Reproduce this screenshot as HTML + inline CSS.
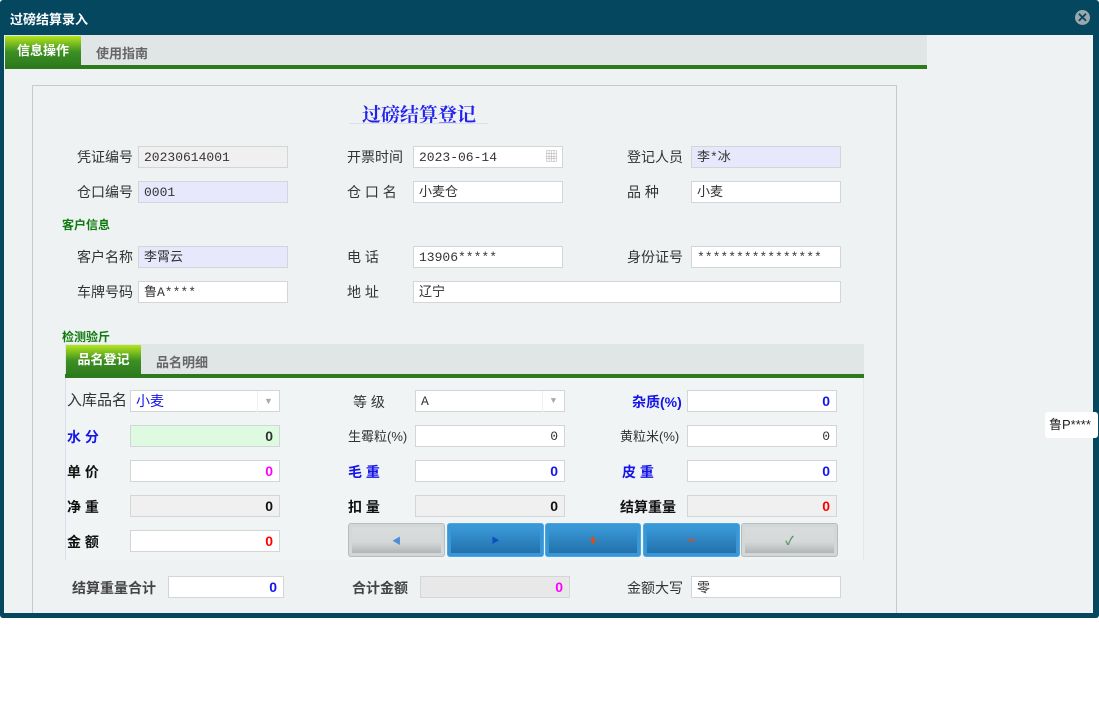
<!DOCTYPE html>
<html><head><meta charset="utf-8"><style>
*{margin:0;padding:0;box-sizing:border-box}
body{width:1099px;height:717px;background:#fff;position:relative;overflow:hidden;font-family:"Liberation Sans","Noto Sans CJK SC",sans-serif;font-size:14px;color:#333}
.a{position:absolute}
.l{position:absolute;font-size:14px;color:#333;line-height:20px;white-space:nowrap}
.b{font-weight:bold;color:#111}
.bl{color:#1515e8;font-weight:bold}
.i{position:absolute;height:22px;background:#fff;border:1px solid #d2d6d8;font-family:"Liberation Mono","Noto Sans CJK SC",monospace;font-size:13px;line-height:21px;padding:0 5px;color:#333;white-space:nowrap}
.r{text-align:right;padding-right:6px;font-family:"Liberation Sans",sans-serif;font-weight:bold;font-size:14px}
.g{background:#f0f0f0}
.p{background:#e8e8fc}
.btn{position:absolute;top:523px;height:34px;border-radius:3px;text-align:center;line-height:34px;font-size:13px}
.gb{background:linear-gradient(#d9dcdd 0%,#d6d9da 55%,#a9acad 100%);border:1px solid #b9bcbd;box-shadow:inset 0 0 0 3px #d4d7d8}
.ub{background:linear-gradient(#3d9ddd,#1f6da6);border:1px solid #4aa6e6;box-shadow:inset 0 0 0 3px #3a97d6}
</style></head><body>
<div class="a" style="left:0;top:0;width:1099px;height:618px;background:#04475f;border-radius:3px"></div>
<div class="a" style="left:10px;top:9px;color:#fff;font-weight:bold;font-size:13px">过磅结算录入</div>
<div class="a" style="left:1075px;top:10px;width:15px;height:15px;border-radius:50%;background:#9aa8ad;color:#04475f;font-size:13px;line-height:15px;text-align:center;font-weight:bold">✕</div>
<div class="a" style="left:4px;top:35px;width:1089px;height:578px;background:#eef2f3"></div>
<div class="a" style="left:5px;top:35px;width:922px;height:30px;background:#e0e5e5"></div>
<div class="a" style="left:5px;top:36px;width:76px;height:29px;background:linear-gradient(#b4e61e,#3b8f22 55%,#2f7d1f);color:#fff;font-weight:bold;font-size:13px;line-height:29px;text-align:center">信息操作</div>
<div class="a" style="left:96px;top:43px;color:#666;font-weight:bold;font-size:13px">使用指南</div>
<div class="a" style="left:5px;top:65px;width:922px;height:4px;background:#2d7a1d"></div>
<div class="a" style="left:32px;top:85px;width:865px;height:528px;border:1px solid #c8cbcc;border-bottom:none"></div>
<div class="a" style="left:362px;top:100px;font-family:'Liberation Serif','Noto Serif CJK SC',serif;font-size:19px;font-weight:bold;color:#2222ee">过磅结算登记</div>
<div class="a" style="left:349px;top:123px;width:139px;height:1px;background:#dde"></div>

<div class="l" style="left:77px;top:147px">凭证编号</div><div class="i g" style="left:138px;top:146px;width:150px">20230614001</div>
<div class="l" style="left:347px;top:147px">开票时间</div><div class="i" style="left:413px;top:146px;width:150px">2023-06-14<span style="position:absolute;right:4px;top:0;color:#aaa;font-size:13px">▦</span></div>
<div class="l" style="left:627px;top:147px">登记人员</div><div class="i p" style="left:691px;top:146px;width:150px">李*冰</div>
<div class="l" style="left:77px;top:182px">仓口编号</div><div class="i p" style="left:138px;top:181px;width:150px">0001</div>
<div class="l" style="left:347px;top:182px">仓 口 名</div><div class="i" style="left:413px;top:181px;width:150px">小麦仓</div>
<div class="l" style="left:627px;top:182px">品 种</div><div class="i" style="left:691px;top:181px;width:150px">小麦</div>
<div class="a" style="left:62px;top:216px;color:#0e7a0e;font-weight:bold;font-size:12px">客户信息</div>
<div class="l" style="left:77px;top:247px">客户名称</div><div class="i p" style="left:138px;top:246px;width:150px">李霄云</div>
<div class="l" style="left:347px;top:247px">电 话</div><div class="i" style="left:413px;top:246px;width:150px">13906*****</div>
<div class="l" style="left:627px;top:247px">身份证号</div><div class="i" style="left:691px;top:246px;width:150px">****************</div>
<div class="l" style="left:77px;top:282px">车牌号码</div><div class="i" style="left:138px;top:281px;width:150px">鲁A****</div>
<div class="l" style="left:347px;top:282px">地 址</div><div class="i" style="left:413px;top:281px;width:428px">辽宁</div>
<div class="a" style="left:62px;top:328px;color:#0e7a0e;font-weight:bold;font-size:12px">检测验斤</div>

<div class="a" style="left:65px;top:344px;width:799px;height:30px;background:#e0e5e5"></div>
<div class="a" style="left:66px;top:345px;width:75px;height:29px;background:linear-gradient(#b4e61e,#3b8f22 55%,#2f7d1f);color:#fff;font-weight:bold;font-size:13px;line-height:29px;text-align:center">品名登记</div>
<div class="a" style="left:156px;top:352px;color:#666;font-weight:bold;font-size:13px">品名明细</div>
<div class="a" style="left:65px;top:374px;width:799px;height:4px;background:#2d7a1d"></div>
<div class="a" style="left:65px;top:378px;width:799px;height:182px;background:#f0f4f5;border-left:1px solid #dde;border-right:1px solid #e4e8e9"></div>

<div class="l" style="left:67px;top:391px;font-size:15px">入库品名</div><div class="i" style="left:130px;top:390px;width:150px;color:#1515e8;font-family:'Liberation Sans','Noto Sans CJK SC',sans-serif;font-size:14px">小麦<span style="position:absolute;right:0;top:0;width:22px;border-left:1px solid #eee;text-align:center;color:#aaa;font-size:9px">▼</span></div>
<div class="l" style="left:353px;top:392px">等 级</div><div class="i" style="left:415px;top:390px;width:150px">A<span style="position:absolute;right:0;top:0;width:22px;border-left:1px solid #eee;text-align:center;color:#aaa;font-size:9px">▼</span></div>
<div class="l bl" style="left:632px;top:392px">杂质(%)</div><div class="i r" style="left:687px;top:390px;width:150px;color:#1515e8">0</div>

<div class="l bl" style="left:67px;top:427px">水 分</div><div class="i r" style="left:130px;top:425px;width:150px;background:#defbe1;color:#333">0</div>
<div class="l" style="left:348px;top:427px;font-size:13px">生霉粒(%)</div><div class="i r" style="left:415px;top:425px;width:150px;font-weight:normal;font-family:'Liberation Mono',monospace;font-size:13px">0</div>
<div class="l" style="left:620px;top:427px;font-size:13px">黄粒米(%)</div><div class="i r" style="left:687px;top:425px;width:150px;font-weight:normal;font-family:'Liberation Mono',monospace;font-size:13px">0</div>

<div class="l b" style="left:67px;top:462px">单 价</div><div class="i r" style="left:130px;top:460px;width:150px;color:#f0f">0</div>
<div class="l bl" style="left:348px;top:462px">毛 重</div><div class="i r" style="left:415px;top:460px;width:150px;color:#1515e8">0</div>
<div class="l bl" style="left:622px;top:462px">皮 重</div><div class="i r" style="left:687px;top:460px;width:150px;color:#1515e8">0</div>

<div class="l b" style="left:67px;top:497px">净 重</div><div class="i r g" style="left:130px;top:495px;width:150px;color:#111">0</div>
<div class="l b" style="left:348px;top:497px">扣 量</div><div class="i r g" style="left:415px;top:495px;width:150px;color:#111">0</div>
<div class="l b" style="left:620px;top:497px">结算重量</div><div class="i r g" style="left:687px;top:495px;width:150px;color:#f00">0</div>

<div class="l b" style="left:67px;top:532px">金 额</div><div class="i r" style="left:130px;top:530px;width:150px;color:#f00">0</div>

<div class="btn gb" style="left:348px;width:97px;color:#4a8fd6;font-size:9px">◀</div>
<div class="btn ub" style="left:447px;width:97px;color:#0b4fc0;font-size:8px">▶</div>
<div class="btn ub" style="left:545px;width:96px;color:#e34a0f;font-weight:bold;font-size:15px">+</div>
<div class="btn ub" style="left:643px;width:97px;color:#e34a0f;font-weight:bold;font-size:15px">−</div>
<div class="btn gb" style="left:741px;width:97px;color:#5a9a6a;font-size:12px;font-weight:bold">✓</div>

<div class="l" style="left:72px;top:578px;font-weight:bold;color:#444">结算重量合计</div><div class="i r" style="left:168px;top:576px;width:116px;color:#1515e8">0</div>
<div class="l" style="left:352px;top:578px;font-weight:bold;color:#444">合计金额</div><div class="i r g" style="left:420px;top:576px;width:150px;background:#e8e8e8;color:#f0f">0</div>
<div class="l" style="left:627px;top:578px">金额大写</div><div class="i" style="left:691px;top:576px;width:150px;font-family:'Liberation Sans','Noto Sans CJK SC',sans-serif">零</div>

<div class="a" style="left:1045px;top:412px;width:53px;height:26px;background:#fff;border-radius:3px;font-size:13px;line-height:26px;padding-left:4px;color:#222">鲁P****</div>
</body></html>
